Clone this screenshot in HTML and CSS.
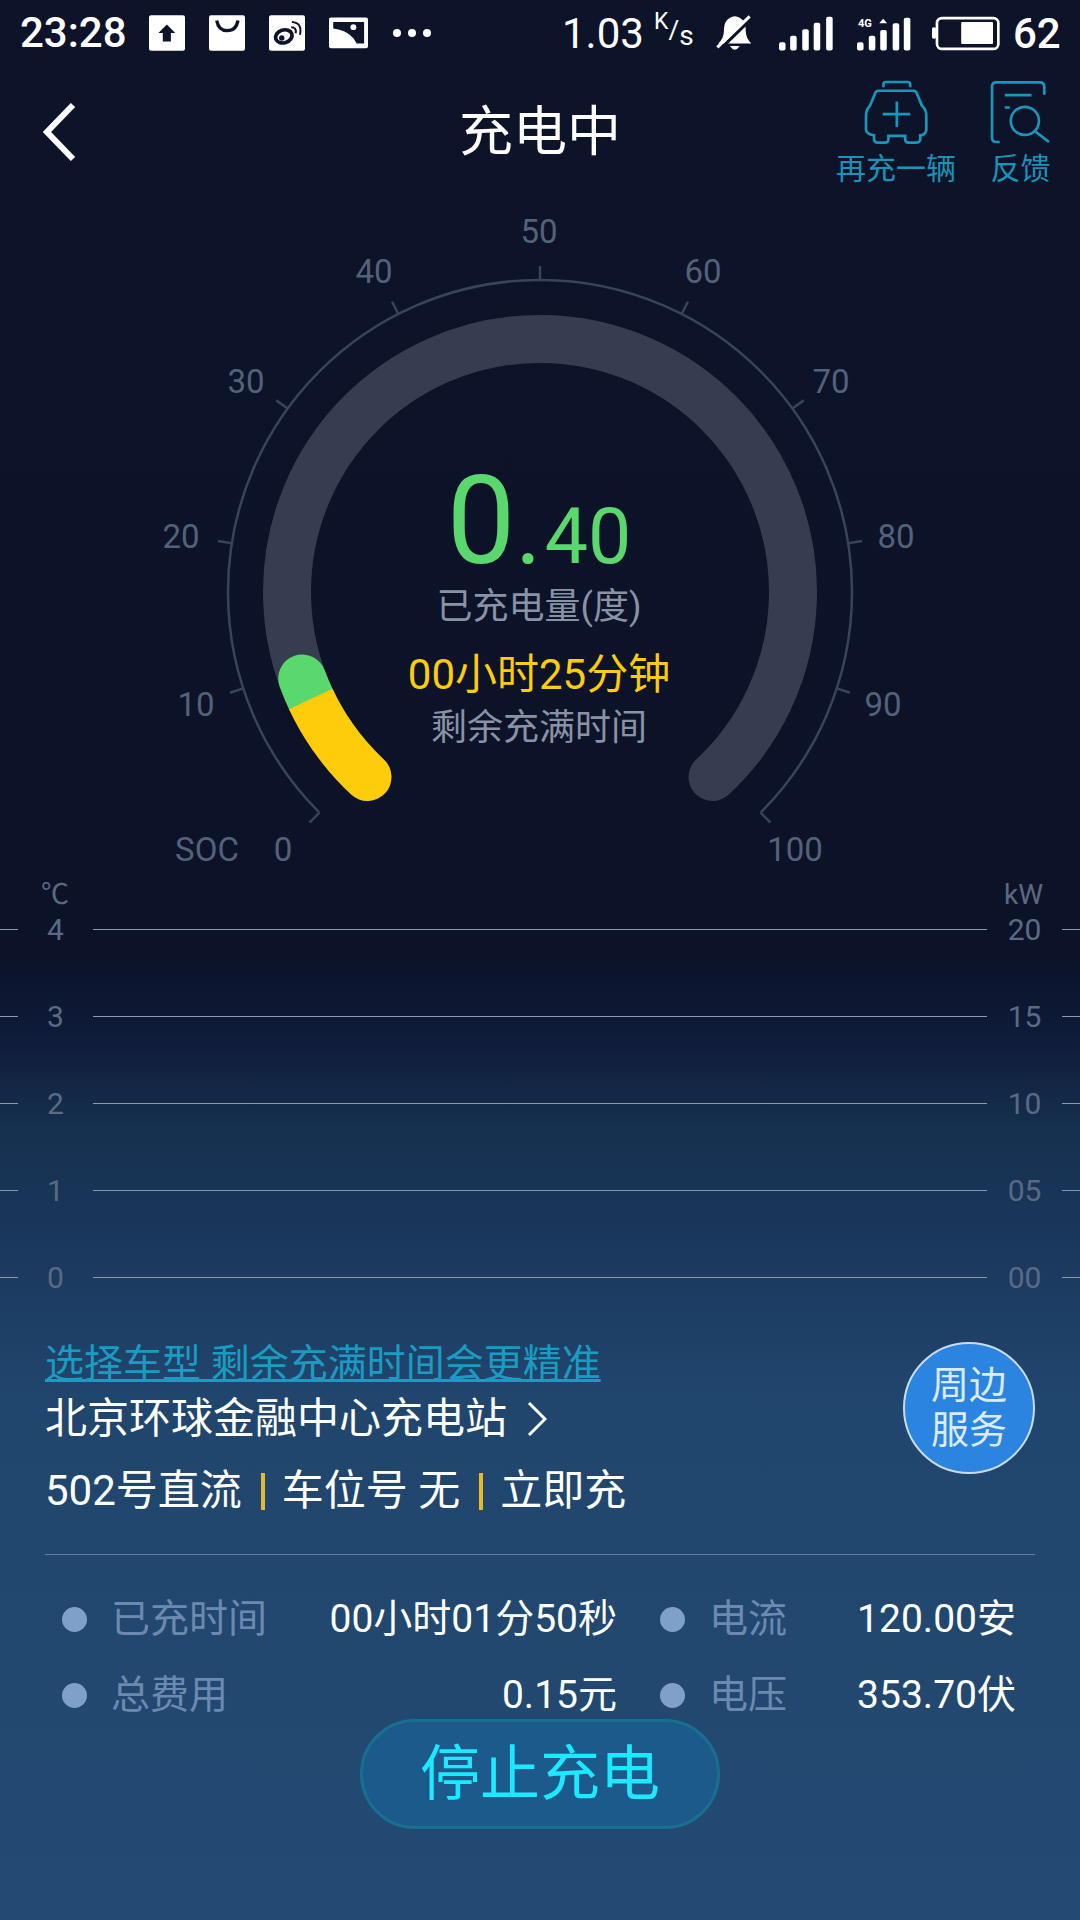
FILE: index.html
```html
<!DOCTYPE html>
<html lang="zh-CN">
<head>
    <meta charset="UTF-8">
    <meta name="viewport" content="width=device-width, initial-scale=1.0">
    <title>充电中</title>
    <link rel="stylesheet" href="styles.css">
</head>
<body>
    <div class="status">
        <span class="clock">23:28</span>
        <svg class="note first" viewBox="27 22 107 106"><rect x="27" y="22" width="107" height="106" rx="6" fill="#fff"/><path d="M80 50L105 75H92V100H68V75H55Z" fill="#0d1329"/></svg>
        <svg class="note" viewBox="207 22 107 106"><rect x="207" y="22" width="107" height="106" rx="6" fill="#fff"/><path d="M230 38Q235 68 261 68Q288 68 293 38" fill="none" stroke="#0d1329" stroke-width="10"/></svg>
        <svg class="note" viewBox="388 22 107 106"><rect x="388" y="22" width="107" height="106" rx="6" fill="#fff"/><ellipse cx="432" cy="85" rx="25" ry="19" transform="rotate(-18 432 85)" fill="none" stroke="#0d1329" stroke-width="11"/><circle cx="426" cy="90" r="8" fill="#0d1329"/><path d="M454 58Q471 58 467 76M456 42Q488 44 480 80" fill="none" stroke="#0d1329" stroke-width="6"/></svg>
        <svg class="note wide" viewBox="567 28 120 96"><rect x="567" y="28" width="120" height="95" rx="6" fill="#fff"/><path d="M580 42H675V108H652Q632 68 580 62Z" fill="#0d1329"/><circle cx="642" cy="58" r="9" fill="#fff"/></svg>
        <span class="dots"><i></i><i></i><i></i></span>
        <span class="speed">1.03</span>
        <span class="unit"><b>K</b>/<em>s</em></span>
        <svg class="bell" viewBox="48 12 112 116"><path d="M105 18Q72 22 72 62Q72 85 55 100H155Q138 85 138 62Q138 22 105 18Z" fill="#fff"/><path d="M90 108Q105 130 120 108Z" fill="#fff"/><path d="M158 22L60 118" stroke="#0d1329" stroke-width="10"/><path d="M150 18L52 112" stroke="#fff" stroke-width="9"/></svg>
        <svg class="signal" viewBox="238 20 165 106"><g fill="#fff"><rect x="238" y="100" width="20" height="25" rx="6"/><rect x="272" y="80" width="20" height="45" rx="6"/><rect x="309" y="60" width="20" height="65" rx="6"/><rect x="344" y="40" width="20" height="85" rx="6"/><rect x="382" y="22" width="20" height="103" rx="6"/></g></svg>
        <svg class="signal lte" viewBox="472 20 165 106"><text x="475" y="54" class="lte-text">4G</text><g fill="#fff"><path d="M540 42L552 28L564 42Z"/><rect x="472" y="100" width="20" height="25" rx="6"/><rect x="508" y="80" width="20" height="45" rx="6"/><rect x="543" y="62" width="20" height="63" rx="6"/><rect x="581" y="42" width="20" height="83" rx="6"/><rect x="615" y="25" width="20" height="100" rx="6"/></g></svg>
        <svg class="battery" viewBox="697 24 205 105"><rect x="697" y="58" width="12" height="34" rx="5" fill="#fff"/><rect x="712" y="30" width="185" height="93" rx="15" fill="none" stroke="#fff" stroke-width="8"/><rect x="785" y="42" width="96" height="66" rx="3" fill="#fff"/></svg>
        <span class="level">62</span>
    </div>

    <div class="header">
        <svg class="back" viewBox="0 0 33 60"><path d="M30 3L4 30L30 57" fill="none" stroke="#fff" stroke-width="6"/></svg>
        <div class="title">充电中</div>
        <div class="actions">
            <div class="action">
                <svg class="action-icon" viewBox="42 18 194 194"><path d="M100 40V32Q100 24 108 24H172Q180 24 180 32V40M85 50H190Q197 50 200 58L215 95Q228 105 228 125V165Q228 180 212 183H210V195Q210 205 195 205H175Q165 205 165 195V185H115V195Q115 205 105 205H85Q72 205 72 195V183Q48 180 48 165V125Q48 105 60 95L75 58Q78 50 85 50ZM140 82V158M98 120H180"/></svg>
                <span>再充一辆</span>
            </div>
            <div class="action">
                <svg class="action-icon" viewBox="410 18 194 194"><path d="M445 203H435Q422 203 422 190V38Q422 25 435 25H565Q578 25 578 38V62M460 63H540M460 100H475M552 172L592 203"/><circle cx="520" cy="140" r="42"/></svg>
                <span>反馈</span>
            </div>
        </div>
    </div>

    <div class="gauge">
        <svg class="dial" viewBox="0 200 1080 670">
            <path class="rim" d="M319.4 812.6A312 312 0 1 1 760.6 812.6"/>
            <g class="ticks">
                <line x1="540" y1="280" x2="540" y2="266" transform="rotate(-135 540 592)"/>
                <line x1="540" y1="280" x2="540" y2="266" transform="rotate(-108 540 592)"/>
                <line x1="540" y1="280" x2="540" y2="266" transform="rotate(-81 540 592)"/>
                <line x1="540" y1="280" x2="540" y2="266" transform="rotate(-54 540 592)"/>
                <line x1="540" y1="280" x2="540" y2="266" transform="rotate(-27 540 592)"/>
                <line x1="540" y1="280" x2="540" y2="266"/>
                <line x1="540" y1="280" x2="540" y2="266" transform="rotate(27 540 592)"/>
                <line x1="540" y1="280" x2="540" y2="266" transform="rotate(54 540 592)"/>
                <line x1="540" y1="280" x2="540" y2="266" transform="rotate(81 540 592)"/>
                <line x1="540" y1="280" x2="540" y2="266" transform="rotate(108 540 592)"/>
                <line x1="540" y1="280" x2="540" y2="266" transform="rotate(135 540 592)"/>
            </g>
            <path class="track" d="M367.5 777A253 253 0 1 1 712.5 777"/>
            <path class="fill-green" d="M310.8 699A253 253 0 0 1 302.2 678.5"/>
            <path class="fill-yellow" d="M367.5 777A253 253 0 0 1 332.8 737.1"/>
            <path class="fill-yellow flat" d="M332.8 737.1A253 253 0 0 1 310.8 699"/>
            <g class="scale">
                <text x="539" y="243">50</text>
                <text x="374" y="283">40</text>
                <text x="703" y="283">60</text>
                <text x="246" y="393">30</text>
                <text x="831" y="393">70</text>
                <text x="181" y="548">20</text>
                <text x="896" y="548">80</text>
                <text x="196" y="716">10</text>
                <text x="883" y="716">90</text>
                <text x="207" y="861">SOC</text>
                <text x="283" y="861">0</text>
                <text x="795" y="861">100</text>
            </g>
        </svg>
        <div class="readout">
            <div class="energy"><span class="whole">0</span><span class="dot">.</span><span class="part">40</span></div>
            <div class="caption first-caption">已充电量(度)</div>
            <div class="remain">00小时25分钟</div>
            <div class="caption">剩余充满时间</div>
        </div>
    </div>

    <div class="chart">
        <div class="units"><span>℃</span><span>kW</span></div>
        <div class="row"><i class="stub"></i><span class="tick">4</span><i class="line"></i><span class="tick">20</span><i class="stub"></i></div>
        <div class="row"><i class="stub"></i><span class="tick">3</span><i class="line"></i><span class="tick">15</span><i class="stub"></i></div>
        <div class="row"><i class="stub"></i><span class="tick">2</span><i class="line"></i><span class="tick">10</span><i class="stub"></i></div>
        <div class="row"><i class="stub"></i><span class="tick">1</span><i class="line"></i><span class="tick">05</span><i class="stub"></i></div>
        <div class="row"><i class="stub"></i><span class="tick">0</span><i class="line"></i><span class="tick">00</span><i class="stub"></i></div>
    </div>

    <div class="info">
        <div class="station">
            <div>
                <a class="tip">选择车型 剩余充满时间会更精准</a>
                <div class="name">北京环球金融中心充电站<svg class="more" viewBox="0 0 20 36"><path d="M2 2L18 18L2 34" fill="none" stroke="#fff" stroke-width="3"/></svg></div>
                <div class="pile">502号直流<i class="bar"></i>车位号 无<i class="bar"></i>立即充</div>
            </div>
            <div class="around">周边<br>服务</div>
        </div>
        <div class="divider"></div>
    </div>

    <div class="stats">
        <div class="stat"><i class="bullet"></i><span class="key">已充时间</span><span class="val">00小时01分50秒</span></div>
        <div class="stat"><i class="bullet"></i><span class="key">电流</span><span class="val">120.00安</span></div>
        <div class="stat"><i class="bullet"></i><span class="key">总费用</span><span class="val">0.15元</span></div>
        <div class="stat"><i class="bullet"></i><span class="key">电压</span><span class="val">353.70伏</span></div>
    </div>

    <div class="stop">停止充电</div>
</body>
</html>
```

FILE: styles.css
```css
*{
    margin: 0;
    padding: 0;
    box-sizing: border-box;
}
html,body{
    width: 1080px;
    height: 1920px;
    overflow: hidden;
}
body{
    font-family: Roboto, "Noto Sans CJK SC", sans-serif;
    color: #fff;
    background: linear-gradient(180deg, #0d1329 0, #0c1329 960px, #0e1a38 1030px, #16304f 1130px, #1a375c 1240px, #21466e 1400px, #234a72 1920px);
}
i{
    font-style: normal;
    display: block;
}

/* status bar */
.status{
    height: 66px;
    display: flex;
    align-items: center;
    padding-left: 20px;
    font-size: 42px;
    font-weight: 500;
}
.clock{
    width: 106px;
    line-height: 66px;
}
.note{
    width: 36px;
    height: 36px;
    margin-left: 24px;
}
.note.first{
    margin-left: 23px;
}
.note.wide{
    width: 39px;
    height: 32px;
}
.dots{
    display: flex;
    gap: 7px;
    margin-left: 25px;
    width: 38px;
}
.dots i{
    width: 8px;
    height: 8px;
    border-radius: 50%;
    background: #fff;
}
.speed{
    margin-left: 131px;
    width: 81px;
    font-weight: 400;
}
.unit{
    margin-left: 11px;
    width: 36px;
    font-size: 26px;
    font-weight: 400;
    display: flex;
    line-height: 36px;
}
.unit b{
    font-weight: 400;
    font-size: 23px;
    margin-top: -8px;
}
.unit em{
    font-style: normal;
    font-size: 28px;
    margin-top: 6px;
}
.bell{
    width: 37px;
    height: 39px;
    margin-left: 26px;
}
.signal{
    width: 54px;
    height: 35px;
    margin-left: 26px;
}
.signal.lte{
    margin-left: 24px;
}
.lte-text{
    font-size: 34px;
    font-weight: 700;
    fill: #fff;
}
.battery{
    width: 68px;
    height: 35px;
    margin-left: 21px;
}
.level{
    margin-left: 13px;
}

/* header */
.header{
    height: 134px;
    display: grid;
    grid-template-columns: 1fr auto 1fr;
    align-items: center;
}
.back{
    width: 33px;
    height: 60px;
    margin: -3px 0 0 43px;
}
.title{
    font-size: 54px;
    line-height: 70px;
}
.actions{
    display: flex;
    justify-content: flex-end;
    align-self: start;
    gap: 32px;
    padding: 14px 27px 0 0;
}
.action{
    display: flex;
    flex-direction: column;
    align-items: center;
    font-size: 30px;
    line-height: 42px;
    color: #1a93b8;
}
.action span{
    margin-top: 3px;
}
.action-icon{
    width: 65px;
    height: 65px;
    fill: none;
    stroke: #1a96bb;
    stroke-width: 8;
}

/* gauge */
.gauge{
    position: relative;
    height: 670px;
}
.dial{
    display: block;
    width: 1080px;
    height: 670px;
}
.rim{
    fill: none;
    stroke: #3a4358;
    stroke-width: 2.5;
}
.ticks line{
    stroke: #3a4358;
    stroke-width: 2.5;
}
.track,.fill-green,.fill-yellow{
    fill: none;
    stroke-width: 48;
    stroke-linecap: round;
}
.track{
    stroke: #373d50;
}
.fill-green{
    stroke: #5ad86e;
}
.fill-yellow{
    stroke: #fdcc0a;
}
.fill-yellow.flat{
    stroke-linecap: butt;
}
.scale text{
    font-size: 33px;
    text-anchor: middle;
    fill: #536279;
}
.readout{
    position: absolute;
    top: 260px;
    left: 0;
    right: 2px;
    display: flex;
    flex-direction: column;
    align-items: center;
}
.energy{
    height: 124px;
    line-height: 124px;
    color: #5ad86e;
    display: flex;
    align-items: baseline;
}
.whole{
    font-size: 122px;
}
.dot{
    font-size: 100px;
}
.part{
    font-size: 77px;
    margin-left: 3px;
}
.caption{
    font-size: 36px;
    line-height: 50px;
    color: #8a92a5;
}
.first-caption{
    margin-top: -2px;
}
.remain{
    font-size: 42px;
    line-height: 56px;
    margin-top: 15px;
    color: #fdcc0d;
}

/* chart */
.chart{
    font-size: 30px;
    color: #5b6a82;
}
.units{
    display: flex;
    justify-content: space-between;
    padding: 0 37px 0 41px;
    height: 30px;
    line-height: 30px;
    font-size: 28px;
    margin: 10px 0 -24px;
}
.row{
    height: 87px;
    display: flex;
    align-items: center;
}
.stub{
    width: 18px;
    height: 1px;
    background: #8d98ad;
}
.line{
    flex: 1;
    height: 1px;
    background: #8d98ad;
}
.tick{
    width: 75px;
    text-align: center;
}

/* station info */
.info{
    padding: 19px 45px 0;
}
.station{
    display: flex;
    justify-content: space-between;
    align-items: flex-start;
}
.tip{
    display: block;
    font-size: 39px;
    line-height: 49px;
    color: #1a9cc2;
    text-decoration: underline;
}
.name{
    font-size: 42px;
    line-height: 60px;
    display: flex;
    align-items: center;
}
.more{
    width: 20px;
    height: 36px;
    margin-left: 20px;
}
.pile{
    font-size: 42px;
    line-height: 60px;
    margin-top: 12px;
    display: flex;
    align-items: center;
}
.bar{
    width: 4px;
    height: 37px;
    margin: 0 17px 0 19px;
    background: #e6b92e;
}
.around{
    width: 132px;
    height: 132px;
    margin-top: 2px;
    border-radius: 50%;
    border: 2px solid #c8dcf5;
    background: #2a84e0;
    font-size: 38px;
    line-height: 45px;
    text-align: center;
    padding-top: 19px;
    color: #dcebfb;
}
.divider{
    height: 1px;
    margin-top: 33px;
    background: #5d7fa3;
}

/* stats */
.stats{
    display: grid;
    grid-template-columns: 555px 356px;
    column-gap: 43px;
    row-gap: 28px;
    padding: 40px 0 0 62px;
}
.stat{
    display: flex;
    align-items: center;
    font-size: 39px;
    line-height: 48px;
}
.bullet{
    width: 25px;
    height: 25px;
    border-radius: 50%;
    background: #7fa0c8;
}
.key{
    margin-left: 24px;
    color: #6c8ab0;
}
.val{
    margin-left: auto;
}

/* stop button */
.stop{
    width: 360px;
    height: 110px;
    margin: 0 auto;
    border: 3px solid #17708f;
    border-radius: 55px;
    background: #1c5a8b;
    color: #1ee8ff;
    font-size: 60px;
    line-height: 106px;
    text-align: center;
}
```
